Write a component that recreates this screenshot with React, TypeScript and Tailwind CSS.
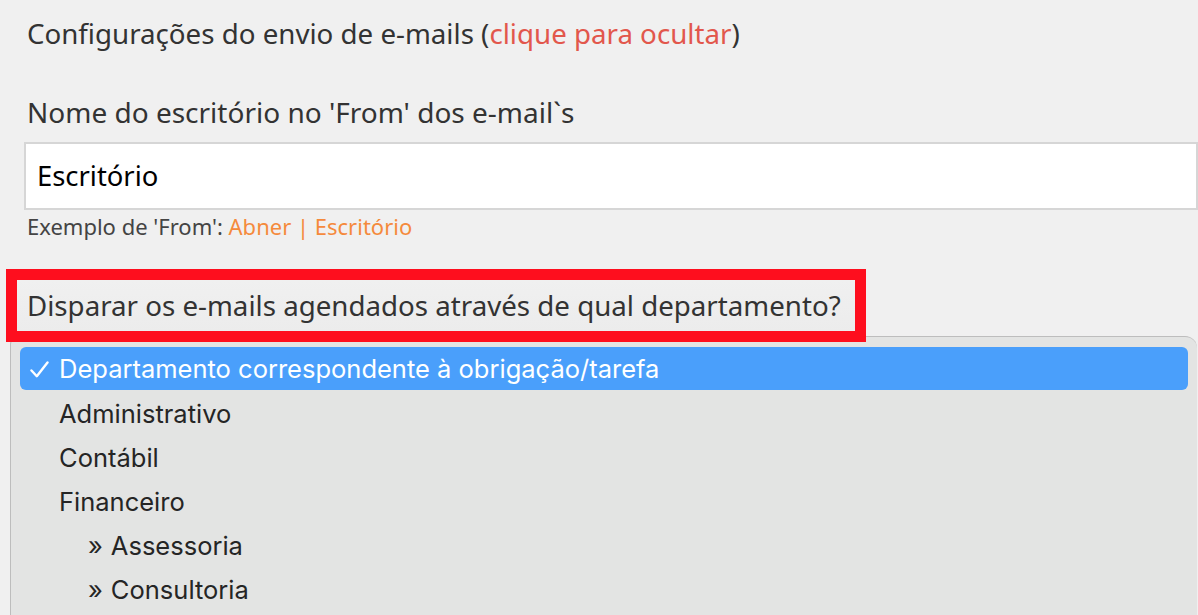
import React from "react";

export default function App() {
  const items: { label: string; sub?: boolean }[] = [
    { label: "Administrativo" },
    { label: "Contábil" },
    { label: "Financeiro" },
    { label: "Assessoria", sub: true },
    { label: "Consultoria", sub: true },
  ];
  return (
    <div
      className="w-[1198px] h-[615px] overflow-hidden bg-[#f0f0f0] text-[#333]"
      style={{ fontFamily: "'Noto Sans', 'Open Sans', sans-serif" }}
    >
      <div className="pl-[27px] pt-[15px]">
        <div className="text-[27.7px] leading-[36px] whitespace-nowrap">
          Configurações do envio de e-mails (
          <span className="text-[#e2574c]">clique para ocultar</span>)
        </div>
        <div className="mt-[43px] text-[28px] leading-[36px] whitespace-nowrap">
          Nome do escritório no 'From' dos e-mail`s
        </div>
      </div>
      <div className="mt-[12px] ml-[24px] h-[68px] border-2 border-[#d6d6d6] bg-white flex items-center pl-[11px] text-[27.4px] text-black">
        Escritório
      </div>
      <div className="pl-[27px] mt-[3px] text-[22px] leading-[26px] text-[#444] whitespace-nowrap">
        Exemplo de 'From': <span className="text-[#f58a3c]">Abner | Escritório</span>
      </div>
      <div className="relative z-10 mt-[30px] ml-[6px] w-[860px] h-[73px] border-[11px] border-[#fe0e1e] flex items-center pl-[10px] bg-[linear-gradient(#f0f0f0,#ececec)]">
        <span className="text-[27.7px] whitespace-nowrap">
          Disparar os e-mails agendados através de qual departamento?
        </span>
      </div>
      <div
        className="-mt-[6px] ml-[10px] w-[1187px] h-[300px] bg-[#e3e4e3] border-l border-t border-[#bdbdbd] rounded-tr-[12px] rounded-tl-[8px] px-[9px] pt-[10px]"
        style={{ fontFamily: "Inter, 'Liberation Sans', Arial, sans-serif" }}
      >
        <div className="h-[43px] rounded-[6px] bg-[#4a9ffb] text-white flex items-center text-[25.5px] pt-[2px]">
          <span className="w-[39px] pl-[10px] flex items-center">
            <svg width="19" height="17" viewBox="0 0 19 17" fill="none">
              <path
                d="M1.5 9.5 L6.8 15.2 L17.5 1.5"
                stroke="white"
                strokeWidth="2.4"
                strokeLinecap="round"
                strokeLinejoin="round"
              />
            </svg>
          </span>
          <span>Departamento correspondente à obrigação/tarefa</span>
        </div>
        {items.map((it) => (
          <div
            key={it.label}
            className="h-[44px] flex items-center text-[25.5px] text-[#252525] pt-[5px]"
            style={{ paddingLeft: it.sub ? 68 : 39 }}
          >
            {it.sub ? <span className="mr-[8px]">»</span> : null}
            {it.label}
          </div>
        ))}
      </div>
    </div>
  );
}
